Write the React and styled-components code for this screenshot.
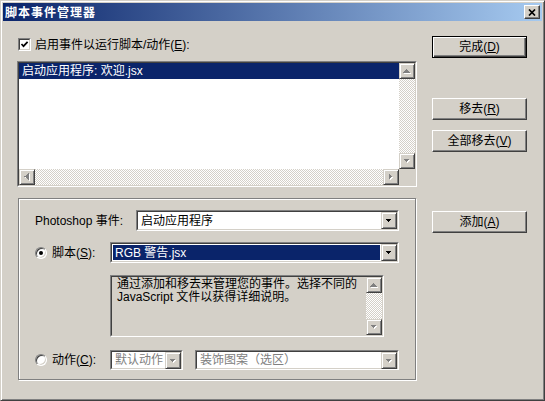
import React from "react";
import styled, { createGlobalStyle } from "styled-components";

const FACE = "#d4d0c8";
const SHADOW = "#808080";
const DARK = "#404040";
const NAVY = "#0a246a";
const FONT = `"Liberation Sans", "Noto Sans CJK SC", sans-serif`;

const GlobalStyle = createGlobalStyle`
  html, body { margin: 0; padding: 0; background: ${FACE}; }
  body { font-family: ${FONT}; font-size: 12px; }
`;

const Window = styled.div`
  width: 545px;
  height: 401px;
  box-sizing: border-box;
  background: ${FACE};
  border: 1px solid;
  border-color: ${FACE} ${DARK} ${DARK} ${FACE};
  box-shadow: inset 1px 1px #fff, inset -1px -1px ${SHADOW};
  padding: 2px;
  display: flex;
  flex-direction: column;
  color: #000;
  font-family: ${FONT};
  font-size: 12px;
  line-height: 14px;
`;

const TitleBar = styled.div`
  height: 18px;
  flex: none;
  display: flex;
  align-items: center;
  justify-content: space-between;
  padding: 0 2px 0 2px;
  background: linear-gradient(to right, ${NAVY}, #a6caf0);
`;

const Title = styled.span`
  color: #fff;
  font-weight: 700;
  font-size: 12px;
  letter-spacing: 1px;
  font-family: "Noto Sans CJK SC", sans-serif;
`;

const CloseBtn = styled.div`
  width: 16px;
  height: 14px;
  box-sizing: border-box;
  background: ${FACE};
  border: 1px solid;
  border-color: #fff ${DARK} ${DARK} #fff;
  box-shadow: inset -1px -1px ${SHADOW};
  display: flex;
  align-items: center;
  justify-content: center;
`;

const Body = styled.div`
  flex: 1;
  display: grid;
  grid-template-columns: 400px 95px;
  column-gap: 15px;
  padding-left: 14px;
  align-items: start;
`;

const Column = styled.div`
  display: flex;
  flex-direction: column;
`;

const CheckRow = styled.label`
  margin-top: 16px;
  height: 15px;
  display: flex;
  align-items: center;
  gap: 4px;
  padding-left: 1px;
`;

const SunkenOuter = styled.div`
  box-sizing: border-box;
  border: 1px solid;
  border-color: ${SHADOW} #fff #fff ${SHADOW};
`;

const SunkenInner = styled.div`
  box-sizing: border-box;
  height: 100%;
  border: 1px solid;
  border-color: ${DARK} ${FACE} ${FACE} ${DARK};
`;

const CheckOuter = styled(SunkenOuter)`
  width: 13px;
  height: 13px;
  flex: none;
`;

const CheckInner = styled(SunkenInner)`
  background: #fff;
  display: flex;
  align-items: center;
  justify-content: center;
`;

const Key = styled.span`
  text-decoration: underline;
  text-underline-offset: 1px;
`;

const ListFrame = styled(SunkenOuter)`
  margin-top: 9px;
  height: 126px;
`;

const ListInner = styled(SunkenInner)`
  background: #fff;
  display: grid;
  grid-template-columns: 1fr 16px;
  grid-template-rows: 1fr 16px;
`;

const ListItems = styled.div`
  display: flex;
  flex-direction: column;
  overflow: hidden;
`;

const ListItem = styled.div`
  height: 16px;
  line-height: 16px;
  padding-left: 3px;
  white-space: nowrap;
  background: ${(p) => (p.$selected ? NAVY : "transparent")};
  color: ${(p) => (p.$selected ? "#fff" : "#000")};
`;

const Track = styled.div`
  flex: 1;
  background: repeating-conic-gradient(#fff 0 25%, ${FACE} 0 50%) 0 0 / 2px 2px;
`;

const VScroll = styled.div`
  display: flex;
  flex-direction: column;
`;

const HScroll = styled.div`
  display: flex;
  flex-direction: row;
`;

const Corner = styled.div`
  background: ${FACE};
`;

const ScrollBtn = styled.div`
  width: 16px;
  height: ${(p) => p.$h || 16}px;
  flex: none;
  box-sizing: border-box;
  background: ${FACE};
  border: 1px solid;
  border-color: ${FACE} ${DARK} ${DARK} ${FACE};
  box-shadow: inset 1px 1px #fff, inset -1px -1px ${SHADOW};
  display: flex;
  align-items: center;
  justify-content: center;
`;

const GroupBox = styled.div`
  margin-top: 11px;
  margin-left: 1px;
  width: 398px;
  height: 182px;
  box-sizing: border-box;
  border: 1px solid ${SHADOW};
  box-shadow: inset 1px 1px #fff, 1px 1px 0 #fff;
  padding: 11px 16px 0 16px;
  display: flex;
  flex-direction: column;
`;

const Row = styled.div`
  display: flex;
  align-items: center;
  height: ${(p) => p.$h}px;
  margin-top: ${(p) => p.$top || 0}px;
  gap: ${(p) => p.$gap || 0}px;
`;

const FieldLabel = styled.div`
  width: ${(p) => p.$w}px;
  flex: none;
  display: flex;
  align-items: center;
  gap: 5px;
  white-space: nowrap;
`;

const Radio = styled.span`
  width: 12px;
  height: 12px;
  box-sizing: border-box;
  border-radius: 50%;
  border: 1px solid;
  border-color: ${SHADOW} #fff #fff ${SHADOW};
  box-shadow: inset 1px 1px ${DARK}, inset -1px -1px ${FACE};
  background: #fff;
  display: flex;
  align-items: center;
  justify-content: center;
  flex: none;
  &::after {
    content: "";
    width: 4px;
    height: 4px;
    border-radius: 50%;
    background: #000;
    display: ${(p) => (p.$checked ? "block" : "none")};
  }
`;

const DropFrame = styled(SunkenOuter)`
  height: 100%;
  flex: ${(p) => (p.$w ? "none" : "1")};
  width: ${(p) => (p.$w ? `${p.$w}px` : "auto")};
`;

const DropInner = styled(SunkenInner)`
  display: flex;
  background: #fff;
`;

const DropField = styled.div`
  flex: 1;
  display: flex;
  align-items: stretch;
  padding: ${(p) => (p.$hl ? "1px" : "0")};
  overflow: hidden;
  white-space: nowrap;
`;

const DropText = styled.span`
  flex: 1;
  display: flex;
  align-items: center;
  padding-left: ${(p) => (p.$hl ? 2 : 3)}px;
  background: ${(p) => (p.$hl ? NAVY : "transparent")};
  color: ${(p) => (p.$hl ? "#fff" : p.$disabled ? SHADOW : "#000")};
`;

const DescFrame = styled(SunkenOuter)`
  margin-top: 12px;
  margin-left: 75px;
  width: 274px;
  height: 62px;
`;

const DescInner = styled(SunkenInner)`
  background: ${FACE};
  display: grid;
  grid-template-columns: 1fr 16px;
`;

const DescText = styled.div`
  padding: 1px 0 0 5px;
  line-height: 13px;
`;

const Button = styled.div`
  width: 95px;
  height: 22px;
  margin-top: ${(p) => p.$top}px;
  box-sizing: border-box;
  background: ${FACE};
  border: 1px solid;
  border-color: ${(p) => (p.$default ? "#000" : `#fff ${DARK} ${DARK} #fff`)};
  box-shadow: ${(p) =>
    p.$default
      ? `inset 1px 1px #fff, inset -1px -1px ${DARK}, inset -2px -2px ${SHADOW}`
      : `inset -1px -1px ${SHADOW}`};
  display: flex;
  align-items: center;
  justify-content: center;
  white-space: nowrap;
`;

const TRI = {
  up: "3.5,1.5 7,5.5 0,5.5",
  down: "0,1.5 7,1.5 3.5,5.5",
  left: "5.5,0 1.5,3.5 5.5,7",
  right: "1.5,0 5.5,3.5 1.5,7",
};

const Arrow = ({ dir, disabled }) => (
  <svg width="8" height="8" viewBox="0 0 8 8" shapeRendering="crispEdges">
    {disabled && <polygon points={TRI[dir]} fill="#fff" transform="translate(1,1)" />}
    <polygon points={TRI[dir]} fill={disabled ? SHADOW : "#000"} />
  </svg>
);

const Dropdown = ({ text, width, hl, disabled }) => (
  <DropFrame $w={width}>
    <DropInner>
      <DropField $hl={hl}>
        <DropText $hl={hl} $disabled={disabled}>{text}</DropText>
      </DropField>
      <ScrollBtn $h={17}>
        <Arrow dir="down" disabled={disabled} />
      </ScrollBtn>
    </DropInner>
  </DropFrame>
);

export default function App() {
  return (
    <>
      <GlobalStyle />
      <Window>
        <TitleBar>
          <Title>脚本事件管理器</Title>
          <CloseBtn>
            <svg width="8" height="7" viewBox="0 0 8 7">
              <path d="M1 0.5L7 6.5M7 0.5L1 6.5" stroke="#000" strokeWidth="1.7" />
            </svg>
          </CloseBtn>
        </TitleBar>
        <Body>
          <Column>
            <CheckRow>
              <CheckOuter>
                <CheckInner>
                  <svg width="9" height="9" viewBox="0 0 9 9">
                    <path d="M1.5 4 L3.5 6.2 L7.6 1.8" stroke="#000" strokeWidth="1.7" fill="none" />
                  </svg>
                </CheckInner>
              </CheckOuter>
              <span>
                启用事件以运行脚本/动作(<Key>E</Key>):
              </span>
            </CheckRow>
            <ListFrame>
              <ListInner>
                <ListItems>
                  <ListItem $selected>启动应用程序: 欢迎.jsx</ListItem>
                </ListItems>
                <VScroll>
                  <ScrollBtn><Arrow dir="up" disabled /></ScrollBtn>
                  <Track />
                  <ScrollBtn><Arrow dir="down" disabled /></ScrollBtn>
                </VScroll>
                <HScroll>
                  <ScrollBtn><Arrow dir="left" disabled /></ScrollBtn>
                  <Track />
                  <ScrollBtn><Arrow dir="right" disabled /></ScrollBtn>
                </HScroll>
                <Corner />
              </ListInner>
            </ListFrame>
            <GroupBox>
              <Row $h={21}>
                <FieldLabel $w={101}>Photoshop 事件:</FieldLabel>
                <Dropdown text="启动应用程序" />
              </Row>
              <Row $h={21} $top={11}>
                <FieldLabel $w={75}>
                  <Radio $checked />
                  <span>脚本(<Key>S</Key>):</span>
                </FieldLabel>
                <Dropdown text="RGB 警告.jsx" hl />
              </Row>
              <DescFrame>
                <DescInner>
                  <DescText>
                    通过添加和移去来管理您的事件。选择不同的
                    <br />
                    JavaScript 文件以获得详细说明。
                  </DescText>
                  <VScroll>
                    <ScrollBtn><Arrow dir="up" disabled /></ScrollBtn>
                    <Track />
                    <ScrollBtn><Arrow dir="down" disabled /></ScrollBtn>
                  </VScroll>
                </DescInner>
              </DescFrame>
              <Row $h={20} $top={13}>
                <FieldLabel $w={75}>
                  <Radio />
                  <span>动作(<Key>C</Key>):</span>
                </FieldLabel>
                <Row $h={20} $gap={12} style={{ flex: 1 }}>
                  <Dropdown text="默认动作" width={73} disabled />
                  <Dropdown text="装饰图案（选区）" disabled />
                </Row>
              </Row>
            </GroupBox>
          </Column>
          <Column>
            <Button $top={15} $default>完成(<Key>D</Key>)</Button>
            <Button $top={40}>移去(<Key>R</Key>)</Button>
            <Button $top={10}>全部移去(<Key>V</Key>)</Button>
            <Button $top={59}>添加(<Key>A</Key>)</Button>
          </Column>
        </Body>
      </Window>
    </>
  );
}
